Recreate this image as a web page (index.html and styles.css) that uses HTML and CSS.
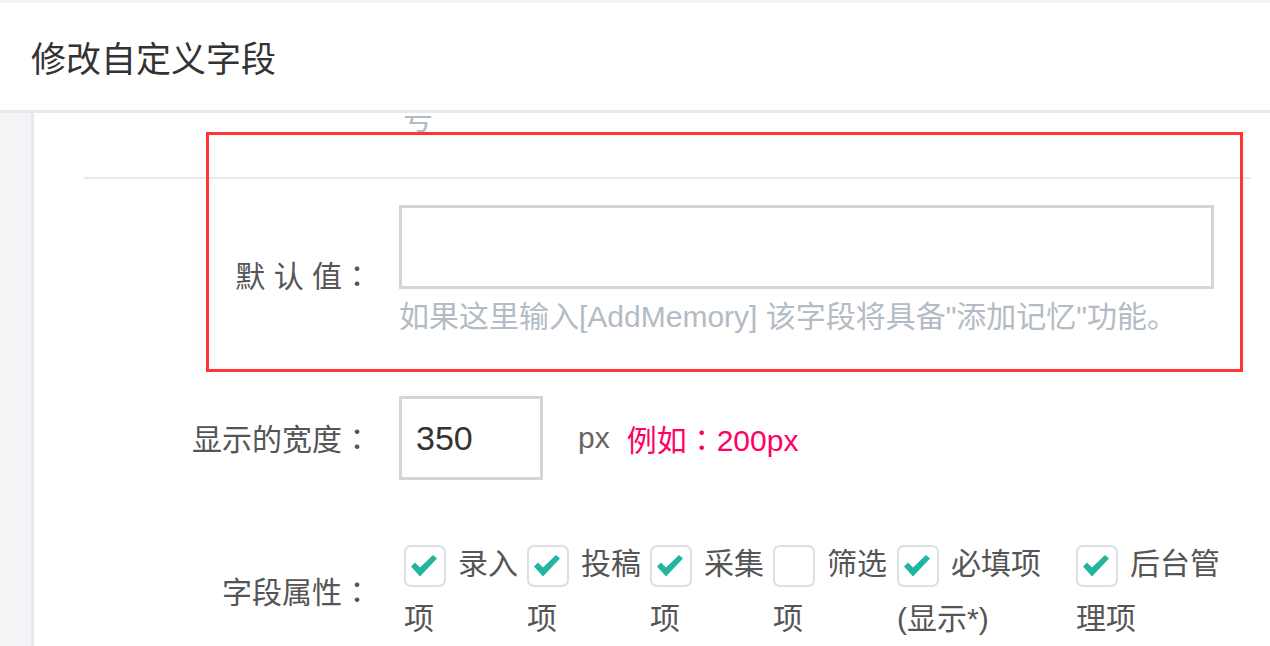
FILE: index.html
```html
<!DOCTYPE html>
<html lang="zh-CN">
<head>
<meta charset="utf-8">
<title>修改自定义字段</title>
<link rel="stylesheet" href="styles.css">
</head>
<body>
<div class="top-strip"></div>
<header class="page-head">
  <h1 class="page-title">修改自定义字段</h1>
</header>
<main class="layout">
  <aside class="side"></aside>
  <section class="panel">
    <div class="panel-inner">
      <div class="row row-tail">
        <div class="label"></div>
        <div class="control"><p class="help tail">号</p></div>
      </div>
      <hr class="divider">
      <div class="row row-default">
        <label class="label" for="dv">默 认 值<span class="colon" lang="zh-TW">：</span></label>
        <div class="control">
          <input id="dv" class="field field-wide" type="text">
          <p class="help">如果这里输入[AddMemory] 该字段将具备"添加记忆"功能。</p>
        </div>
      </div>
      <div class="row row-width">
        <label class="label" for="wd">显示的宽度<span class="colon" lang="zh-TW">：</span></label>
        <div class="control inline">
          <input id="wd" class="field field-small" type="text" value="350">
          <span class="unit">px</span>
          <span class="example">例如<span class="colon" lang="zh-TW">：</span>200px</span>
        </div>
      </div>
      <div class="row row-attrs">
        <div class="label">字段属性<span class="colon" lang="zh-TW">：</span></div>
        <div class="control options">
          <label class="opt"><span class="cb"><svg viewBox="0 0 38 38" class="tick"><path d="M5 19.5 L9 15.5 L14 20.5 L27 8 L31 11.5 L14 29.5 Z"/></svg></span>录入项</label>
          <label class="opt"><span class="cb"><svg viewBox="0 0 38 38" class="tick"><path d="M5 19.5 L9 15.5 L14 20.5 L27 8 L31 11.5 L14 29.5 Z"/></svg></span>投稿项</label>
          <label class="opt"><span class="cb"><svg viewBox="0 0 38 38" class="tick"><path d="M5 19.5 L9 15.5 L14 20.5 L27 8 L31 11.5 L14 29.5 Z"/></svg></span>采集项</label>
          <label class="opt opt-filter"><span class="cb"></span>筛选项</label>
          <label class="opt opt-required"><span class="cb"><svg viewBox="0 0 38 38" class="tick"><path d="M5 19.5 L9 15.5 L14 20.5 L27 8 L31 11.5 L14 29.5 Z"/></svg></span>必填项(显示*)</label>
          <label class="opt opt-admin"><span class="cb"><svg viewBox="0 0 38 38" class="tick"><path d="M5 19.5 L9 15.5 L14 20.5 L27 8 L31 11.5 L14 29.5 Z"/></svg></span>后台管理项</label>
        </div>
      </div>
    </div>
  </section>
</main>
<div class="annotation"></div>
</body>
</html>
```
FILE: styles.css
```css
* { box-sizing: border-box; }
html, body { margin: 0; padding: 0; }
body {
  width: 1270px;
  height: 646px;
  overflow: hidden;
  position: relative;
  background: #f3f4f6;
  font-family: "Liberation Sans", Arial, "Noto Sans CJK SC", sans-serif;
  color: #555;
}
.top-strip { height: 3px; }
.page-head {
  height: 110px;
  background: #fff;
  border-bottom: 3px solid #e7eaec;
  display: flex;
  align-items: center;
  padding-left: 31px;
}
.page-title {
  margin: 0;
  font-size: 35px;
  font-weight: normal;
  color: #333;
}
.layout { display: flex; height: 533px; }
.side { width: 31px; flex: none; }
.panel {
  flex: 1;
  background: #fff;
  border-left: 3px solid #e7eaec;
  overflow: hidden;
  padding: 0 19px 0 50px;
}
.panel-inner { margin-top: -22px; }
.row { display: flex; align-items: center; }
.label {
  width: 288px;
  flex: none;
  margin-right: 27px;
  text-align: right;
  font-size: 30px;
  line-height: 1.2;
  color: #555;
}
.colon { font-family: "Noto Sans CJK TC", "Noto Sans CJK JP", sans-serif; }
.control { font-size: 30px; }
.help {
  margin: 0;
  line-height: 56px;
  font-size: 30px;
  color: #b3bbc4;
  white-space: nowrap;
}
.tail { padding-left: 4px; }
.divider {
  border: 0;
  border-top: 2px solid #e7eaec;
  height: 0;
  margin: 30px 0 0;
}
.row-default { margin-top: 26px; }
.field {
  display: block;
  height: 84px;
  border: 3px solid #d1d6da;
  border-radius: 0;
  padding: 0 14px;
  background: #fff;
  outline: none;
  font-family: "Liberation Sans", Arial, sans-serif;
  font-size: 34px;
  color: #333;
}
.field-wide { width: 815px; }
.field-small { width: 144px; }
.row-width { margin-top: 51px; }
.inline { display: flex; align-items: center; }
.unit { margin-left: 35px; color: #666; }
.example { margin-left: 17px; color: #ff0066; }
.row-attrs { margin-top: 56px; }
.options {
  display: flex;
  padding-left: 5px;
  line-height: 55px;
  color: #555;
}
.opt { display: block; flex: none; width: 123px; }
.opt-filter { width: 124px; }
.opt-required { width: 179px; }
.opt-admin { width: 154px; }
.cb {
  display: inline-block;
  width: 42px;
  height: 42px;
  margin-right: 12px;
  border: 2px solid #dce0e3;
  border-radius: 7px;
  background: #fff;
  vertical-align: middle;
  line-height: 0;
}
.tick { width: 38px; height: 38px; display: block; }
.tick path { fill: #21b5a2; }
.annotation {
  position: absolute;
  left: 206px;
  top: 132px;
  width: 1037px;
  height: 240px;
  border: 3px solid #ff3535;
  pointer-events: none;
}
```
